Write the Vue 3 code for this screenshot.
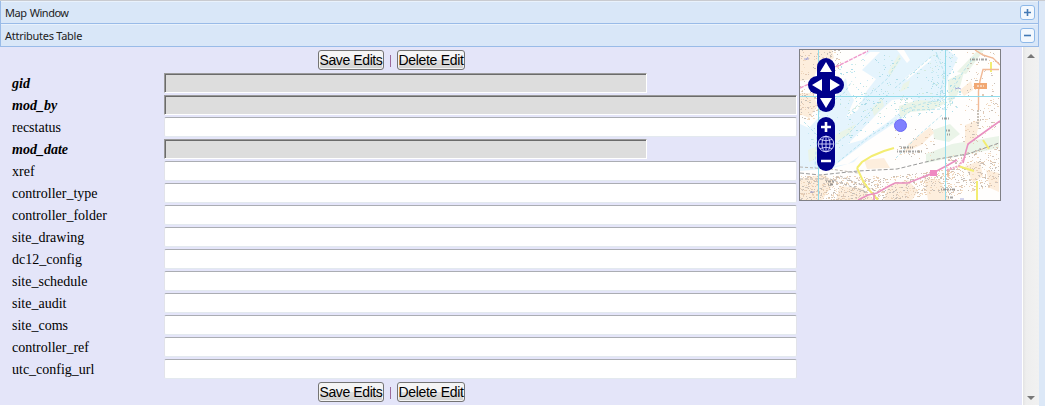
<script setup>
const fields = [
  { name: 'gid', locked: true, short: true },
  { name: 'mod_by', locked: true },
  { name: 'recstatus' },
  { name: 'mod_date', locked: true, short: true },
  { name: 'xref' },
  { name: 'controller_type' },
  { name: 'controller_folder' },
  { name: 'site_drawing' },
  { name: 'dc12_config' },
  { name: 'site_schedule' },
  { name: 'site_audit' },
  { name: 'site_coms' },
  { name: 'controller_ref' },
  { name: 'utc_config_url' },
]

// Deterministic stipple for the built-up areas of the overview map
let seed = 7
const rand = () => {
  seed = (seed * 16807) % 2147483647
  return seed / 2147483647
}
const scatter = (n, x0, y0, w, h, colors, slope = 0) =>
  Array.from({ length: n }, () => {
    const u = rand()
    const x = Math.floor(x0 + u * w)
    const y = Math.floor(y0 + u * slope + rand() * h)
    return { x, y, w: rand() > 0.7 ? 2 : 1, fill: colors[Math.floor(rand() * colors.length)] }
  })
const town = ['#e3cab4', '#d3c6bd', '#ecd3b9', '#c6beb6', '#f5dec5']
const water = ['#b4e0ec', '#c6e9f3', '#addce8', '#d4ebdf']
const dots = [
  ...scatter(150, 0, 0, 42, 40, town, -20),
  ...scatter(90, 0, 38, 20, 32, town),
  ...scatter(480, 0, 126, 80, 24, town),
  ...scatter(400, 78, 128, 78, 24, town, -10),
  ...scatter(330, 145, 106, 54, 42, town, -12),
  ...scatter(70, 160, 68, 39, 34, town, -22),
  ...scatter(80, 165, 2, 34, 60, town),
  ...scatter(45, 95, 78, 42, 34, town),
  ...scatter(170, 8, 68, 130, 44, water, -60),
  ...scatter(100, 95, 48, 65, 22, water, -12),
  ...scatter(100, 130, 0, 26, 62, water),
  ...scatter(70, 38, 16, 55, 50, water, -14),
]
</script>

<template>
  <div class="page">
    <main class="panel">
      <header class="bar">
        <span class="mapwin">Map Window</span>
        <svg class="tool" width="15" height="15" viewBox="0 0 15 15">
          <rect x=".5" y=".5" width="14" height="14" rx="2.5" fill="#f3f8fe" stroke="#8db8e8" />
          <path d="M4 7.5h7M7.5 4v7" stroke="#4379b5" stroke-width="1.6" />
        </svg>
      </header>
      <header class="bar">
        <span class="attr">Attributes Table</span>
        <svg class="tool" width="15" height="15" viewBox="0 0 15 15">
          <rect x=".5" y=".5" width="14" height="14" rx="2.5" fill="#f3f8fe" stroke="#8db8e8" />
          <path d="M4 7.5h7" stroke="#4379b5" stroke-width="1.6" />
        </svg>
      </header>
      <section class="body">
        <div class="form">
          <div class="actions">
            <button class="save">Save Edits</button><i class="sep"></i><button class="del">Delete Edit</button>
          </div>
          <div v-for="f in fields" :key="f.name" class="row">
            <label :class="{ key: f.locked }">{{ f.name }}</label>
            <input type="text" :class="{ short: f.short, locked: f.locked }" :disabled="f.locked" />
          </div>
          <div class="actions bottom">
            <button class="save">Save Edits</button><i class="sep"></i><button class="del">Delete Edit</button>
          </div>
        </div>
        <svg class="map" width="200" height="150" viewBox="0 0 200 150">
          <rect width="200" height="150" fill="#fffefd" />
          <!-- estuary -->
          <path d="M68 0H148L158 8 148 28 143 50 112 56 98 68 88 84 68 96 54 112 34 118 0 121V72L20 58 34 50 44 30 58 18Z" fill="#e5f4fd" />
          <!-- sand and mud banks -->
          <path d="M45 22 70 2H80L62 20 76 29 66 42 58 60 46 68 54 50 48 40ZM75 66 92 50 110 48 118 54 103 60 88 72 62 90 48 94ZM0 64 14 52 20 66 9 78 0 74ZM105 28 130 8 131 10 107 30ZM97 0H104L110 10 107 13ZM34 116 66 92 93 74 96 79 68 100 48 114Z" fill="#fffefd" />
          <!-- marsh -->
          <path d="M72 58 82 48 84 56 74 66ZM88 22 99 4 101 9 90 26ZM148 30 164 22 158 44 149 54ZM103 34 110 30 108 38 100 42ZM99 56 118 50 148 52 132 60 110 62 100 68ZM33 86 56 74 50 84 36 91ZM133 80 150 74 160 84 149 92 134 89ZM126 104 152 94 199 86V98L165 105 126 113ZM157 22 178 0H184L166 24ZM8 100 20 95 17 108 9 112Z" fill="#eaf4e8" />
          <!-- built-up ground -->
          <path d="M0 0H32L34 8 18 18 13 29 0 31ZM0 43H12L18 56 9 68 0 64ZM0 129 24 124 34 133 22 150H0ZM40 136 62 138 74 150H36ZM64 110 84 108 90 118 67 119ZM88 136 108 130 118 141 112 150H84ZM124 128 140 130 150 150H128ZM165 116 180 111 183 126 173 133ZM186 120 199 123V142L190 138ZM160 40 171 31 173 40 164 46ZM108 94 130 77 134 83 121 95 104 103ZM165 75 180 70 176 87 165 95Z" fill="#fdeedd" />
          <g fill="none" stroke="#a4dbe9" stroke-width="1" stroke-dasharray="3 2" opacity=".75">
            <path d="M19 62 45 42 52 31M48 64 88 28 100 8M23 104 48 84 87 45M38 112 70 86 101 67M95 38 132 6M136 2 144 22 140 48M151 42 163 22 174 7M104 60 124 53 155 48M100 69 112 60 145 59M4 72 17 85 15 118M96 108 120 84 142 65" />
          </g>
          <rect v-for="(d, i) in dots" :key="i" :x="d.x" :y="d.y" :width="d.w" height="1" :fill="d.fill" />
          <path d="M0 123 20 125 58 121 97 119 138 109 168 104 199 93" fill="none" stroke="#9a9a9a" stroke-dasharray="4 2" />
          <path d="M0 117 30 119 58 123M0 129H30L66 142M40 126 78 142" fill="none" stroke="#b9b3ad" stroke-dasharray="3 2" />
          <path d="M57 118 62 112 72 106 84 101 94 98M57 118 63 131 70 141 78 150M158 116 174 121M177 131V150M183 90 189 99M191 12V22" fill="none" stroke="#f3ed72" stroke-width="2" />
          <path d="M175 0 183 5 193 8 200 15M199 19.5H183L180 31 178.500 41V60M148 120V127" fill="none" stroke="#f1b996" stroke-width="1.4" />
          <path d="M178 60V76" stroke="#c8c1b8" stroke-width="2" stroke-dasharray="2 1" />
          <path d="M0 38 9 34M31 19 48 11 68 1" fill="none" stroke="#ef9bcd" stroke-width="1.4" stroke-dasharray="4 1" />
          <path d="M58 150 68 145 77 143 89 136 95 133H108L133 123 148 115 157 110M163 113 166 101 168 94 179 86 200 71M74 143V150" fill="none" stroke="#e990c0" stroke-width="1.600" />
          <path d="M147 120 159 116 164 108" fill="none" stroke="#f0a4cb" stroke-width="2" stroke-dasharray="2 1" />
          <rect x="130" y="120" width="7" height="6" fill="#ef88c1" />
          <path d="M0 46.5H200M18.5 0V150M145.5 0V150" stroke="#92dbea" />
          <rect x="174" y="33" width="13" height="6" fill="#f1a873" />
          <path d="M177 36h7" stroke="#fff" stroke-width="1" stroke-dasharray="2 1" />
          <path d="M170 9.5h18M101 97.5h12M97 101.5h25M141 139.5h14M148 147.5h6M146 80.5h4M147 84.5h3M26 131.5h9M28 134.5h6M142 68.5h7" stroke="#777" stroke-width="2" stroke-dasharray="1 1 3 1 2 1" opacity=".65" />
          <path d="M4 9h5M8 7l-2 3M155 39l3-1 3 1M10 142h4M160 149h4" fill="none" stroke="#8589d1" opacity=".7" />
          <circle cx="100.5" cy="75.5" r="6" fill="#8080ff" stroke="#6868f5" />
          <!-- pan and zoom controls -->
          <g fill="#00008b">
            <rect x="17" y="8" width="18" height="54" rx="9" />
            <rect x="8" y="26" width="36" height="18" rx="9" />
            <rect x="17" y="67" width="18" height="54" rx="9" />
          </g>
          <path d="M20 22 26 12 32 22ZM20 48H32L26 58ZM22 29V41L12 35ZM30 29V41L40 35Z" fill="#fff" />
          <path d="M21 77H31M26 72V82M21 111H31" stroke="#fff" stroke-width="2.6" />
          <g fill="none" stroke="#d8d8ff" stroke-width=".9">
            <circle cx="26" cy="94" r="7.8" />
            <ellipse cx="26" cy="94" rx="4" ry="7.8" />
            <path d="M26 86V102M18 94H34M20 89.5Q26 92 32 89.5M20 98.5Q26 96 32 98.5" />
          </g>
        </svg>
        <div class="scroll">
          <svg width="8" height="4" viewBox="0 0 8 4"><path d="M0 4 4 0 8 4Z" fill="#777" /></svg>
          <svg width="8" height="4" viewBox="0 0 8 4"><path d="M0 0H8L4 4Z" fill="#777" /></svg>
        </div>
      </section>
    </main>
  </div>
</template>

<style>
body { margin: 0; overflow: hidden; }
</style>
<style scoped>
.page { box-sizing: border-box; width: 1045px; height: 406px; border-top: 1px solid #c9cbd0; background: #dce8f7; }
.panel { box-sizing: border-box; width: 1039px; height: 405px; display: flex; flex-direction: column; background: #fff; }
.bar {
  box-sizing: border-box; height: 23px; flex: none; display: flex; align-items: center; justify-content: space-between;
  padding: 0 3px 0 4px; border: 1px solid #99bbe8; border-top: 0; background: #d9e7f8;
  box-shadow: inset 0 1px #e9f2fc; font: 11px/22px "Noto Sans", sans-serif; color: #222;
}
.bar span { padding-top: 2px; line-height: 20px; }
.mapwin { letter-spacing: -.5px; word-spacing: 1px; }
.attr { letter-spacing: -.27px; }
.tool { display: block; }
.body { display: flex; height: 358px; background: #e4e5f9; }
.form { width: 787px; padding: 2px 0 0 12px; }
.actions { display: flex; align-items: center; height: 22px; padding-left: 306px; }
.actions.bottom { padding-top: 2px; }
.actions button {
  box-sizing: border-box; height: 20px; padding: 1px 0 0; border: 1px solid #747474; border-radius: 3px;
  background: linear-gradient(#f5f5f5 0 48%, #dfdfdf 52%, #d0d0d0); box-shadow: inset 0 0 0 1px #f4f4f4;
  font: 14px/17px "Liberation Sans", Arial, sans-serif; color: #000; white-space: nowrap; text-align: center;
}
.save { width: 66px; letter-spacing: -.4px; }
.del { width: 68px; letter-spacing: -.3px; }
.sep { width: 1px; height: 12px; margin: 2px 6px 0 6px; background: #9a6a9a; }
.row { display: flex; height: 22px; }
label { width: 152px; font: 14px/21px "Liberation Serif", "Times New Roman", serif; color: #000; padding-top: 2px; box-sizing: border-box; }
.key { font-weight: bold; font-style: italic; }
input {
  box-sizing: border-box; width: 633px; height: 20px; margin: 2px 0 0; padding: 0; border: 1px solid; border-radius: 2px;
  border-color: #abadb3 #e2e3ea #e3e9ef #e2e3ea; background: #fff;
}
input.locked { border-color: #9a9a9a #fff #fff #9a9a9a; border-radius: 0; background: #ddd; box-shadow: inset 1px 1px #6b6b6b; }
input.short { width: 483px; }
.map { flex: none; display: block; margin-top: 2px; border: 1px solid #7f7f85; }
.scroll {
  box-sizing: border-box; width: 17px; margin-left: auto; border-left: 1px solid #fff; padding: 7px 0 5px;
  display: flex; flex-direction: column; align-items: center; justify-content: space-between;
  background: linear-gradient(90deg, #e3e3e3, #eee 3px, #f1f1f1);
}
</style>
